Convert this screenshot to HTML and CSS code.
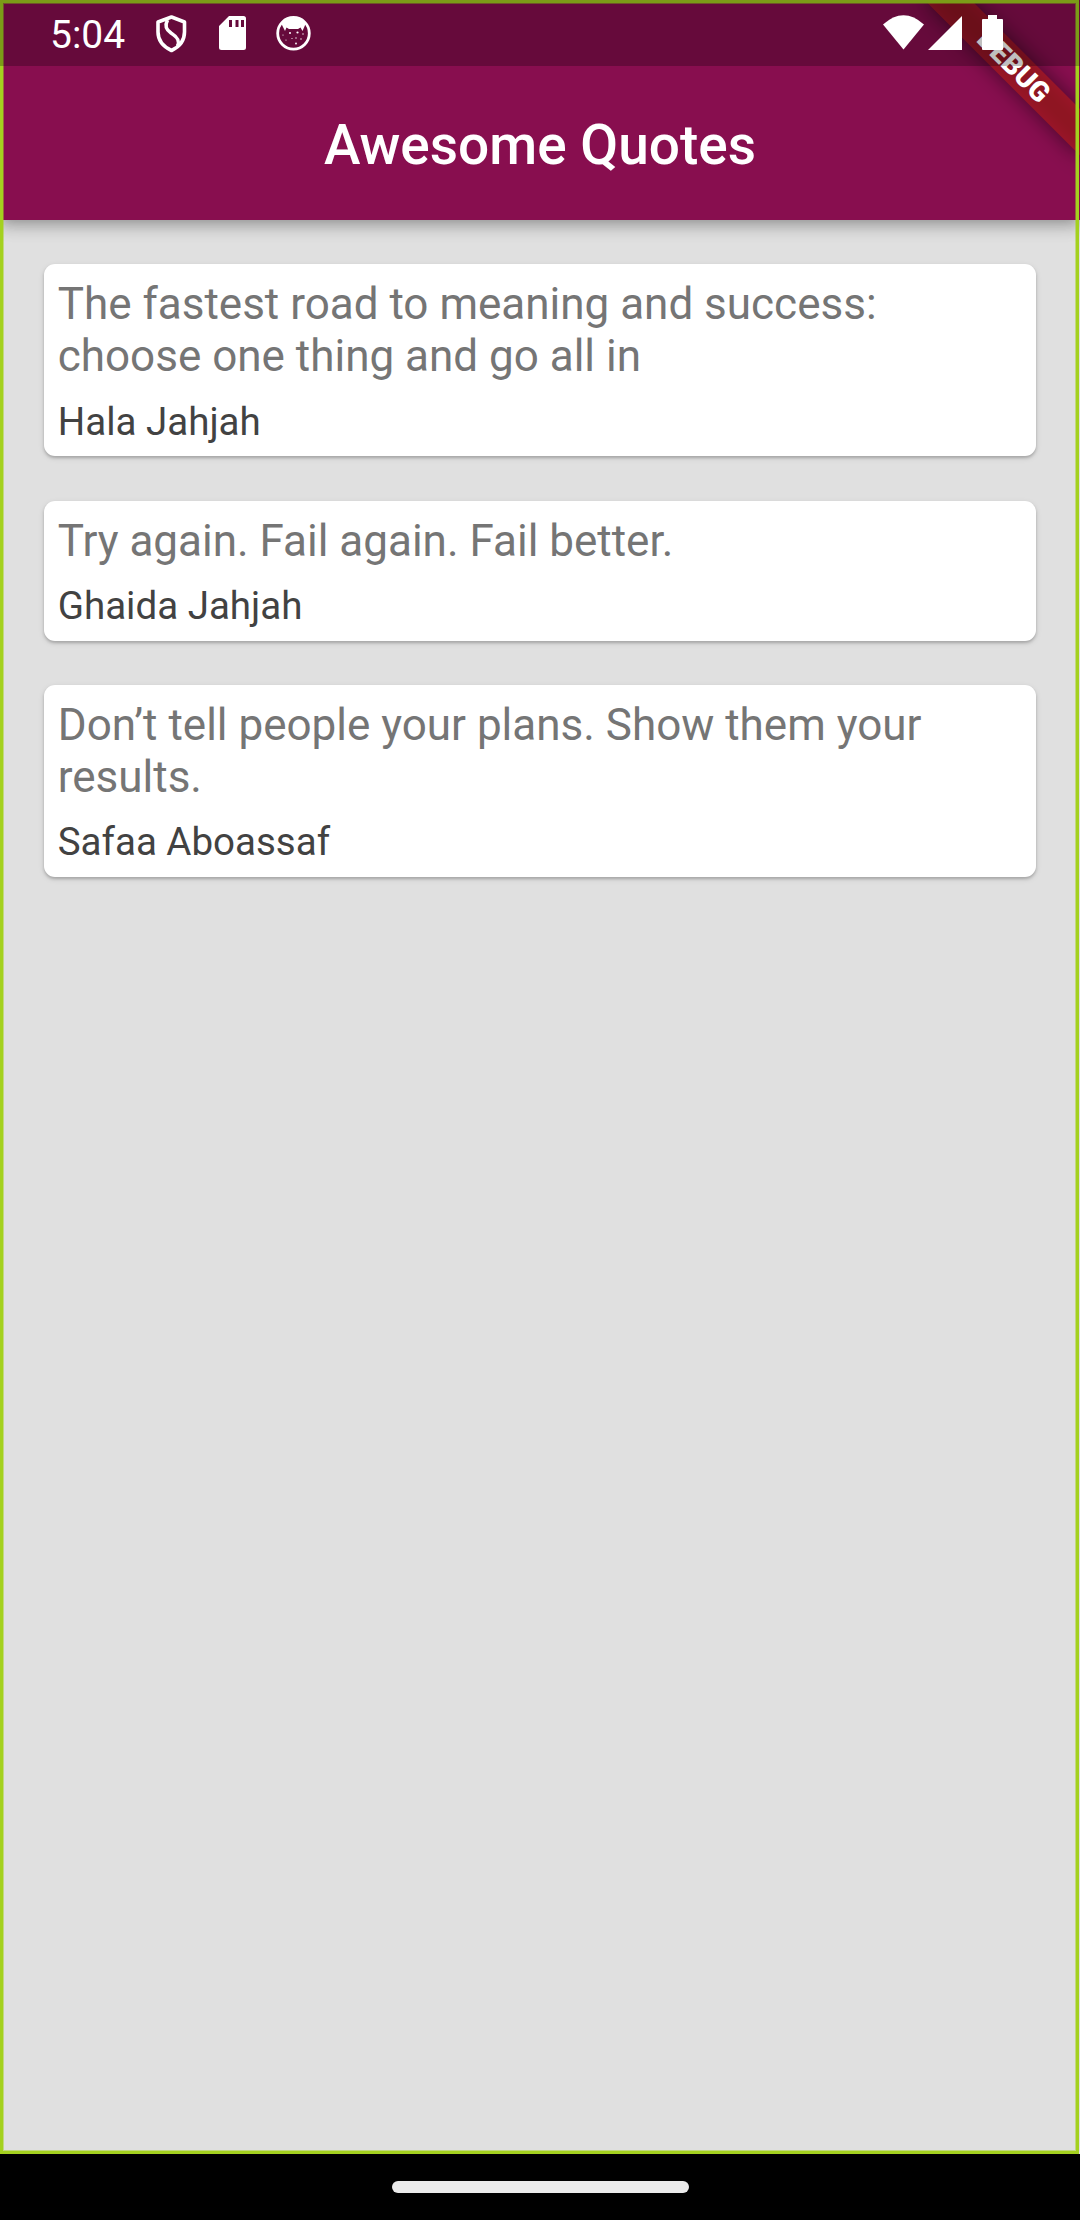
FILE: index.html
```html
<!DOCTYPE html>
<html lang="en">
<head>
<meta charset="utf-8">
<title>Awesome Quotes</title>
<link rel="stylesheet" href="styles.css">
</head>
<body>
<div class="app">
  <header class="app-bar"><h1 class="title">Awesome Quotes</h1></header>
  <main class="quotes">
    <article class="card">
      <p class="quote">The fastest road to meaning and success: choose one thing and go all in</p>
      <p class="author">Hala Jahjah</p>
    </article>
    <article class="card">
      <p class="quote">Try again. Fail again. Fail better.</p>
      <p class="author">Ghaida Jahjah</p>
    </article>
    <article class="card">
      <p class="quote">Don’t tell people your plans. Show them your results.</p>
      <p class="author">Safaa Aboassaf</p>
    </article>
  </main>
  <div class="ribbon"><span class="ribbon-text">DEBUG</span></div>
  <div class="frame"></div>
</div>
<div class="status-bar">
  <span class="clock">5:04</span>
  <svg class="icon-shield" width="34" height="40" viewBox="0 0 34 40" fill="none" stroke="#fff" stroke-width="3.600" stroke-linejoin="round">
    <path d="M16.500 2 L29.500 7 V17 C29.500 26 25 31.500 16.500 35.500 C8 31.500 3 26 3 17 V7 Z"/>
    <path d="M12.500 5 C9.500 11 11 14.500 16 18 C23 22.500 25 26 22.500 31"/>
  </svg>
  <svg class="icon-sd" width="28" height="36" viewBox="0 0 28 36">
    <path fill="#fff" fill-rule="evenodd" d="M10 1 H24.500 Q27 1 27 3.500 V32.500 Q27 35 24.500 35 H2.500 Q0 35 0 32.500 V11 Z M10 5 V12 H13 V5 Z M16.500 5 V12 H19.500 V5 Z M22 5 V12 H25 V5 Z"/>
  </svg>
  <svg class="icon-cat" width="36" height="36" viewBox="0 0 36 36">
    <circle cx="17.500" cy="18.300" r="15.800" fill="none" stroke="#fff" stroke-width="2.800"/>
    <path fill="#fff" d="M5 8 Q17.500 -3 30 8 L26.500 16 L24.500 12.500 L22 14 H13 L10.500 12.500 L9 16 Z"/>
    <g fill="#fff"><circle cx="14" cy="18" r="1"/><circle cx="21.500" cy="17.500" r="1.100"/><circle cx="7" cy="20" r=".6"/><circle cx="27" cy="19" r=".7"/><circle cx="10" cy="25" r=".6"/><circle cx="20" cy="28.500" r=".9"/><circle cx="25" cy="24" r=".7"/><circle cx="16" cy="23.500" r=".6"/><circle cx="20" cy="23" r=".7"/></g>
  </svg>
  <svg class="icon-wifi" width="42" height="36" viewBox="0 0 42 36"><path fill="#fff" d="M0 9.500 Q20.500 -9 41 9.500 L20.500 34.500 Z"/></svg>
  <svg class="icon-cell" width="35" height="36" viewBox="0 0 35 36"><path fill="#fff" d="M0 35 L34 1 V35 Z"/></svg>
  <svg class="icon-battery" width="22" height="36" viewBox="0 0 22 36"><path fill="#fff" d="M6 0 H15 V4 H20 Q21 4 21 5 V34 Q21 35 20 35 H1 Q0 35 0 34 V5 Q0 4 1 4 H6 Z"/></svg>
</div>
<nav class="nav-bar"><div class="handle"></div></nav>
</body>
</html>
```

FILE: styles.css
```css
* { box-sizing: border-box; }
body {
  margin: 0;
  width: 1080px;
  height: 2220px;
  position: relative;
  display: flex;
  flex-direction: column;
  overflow: hidden;
  background: #000;
  font-family: Roboto, "Liberation Sans", sans-serif;
}
.app {
  position: relative;
  height: 2154px;
  display: flex;
  flex-direction: column;
  overflow: hidden;
  background: #e0e0e0;
}
.app-bar {
  height: 220px;
  padding-top: 70px;
  display: flex;
  align-items: center;
  justify-content: center;
  flex: none;
  background: #880e4f;
  box-shadow: 0 5px 11px -3px rgba(0,0,0,.16), 0 8px 14px rgba(0,0,0,.14), 0 3px 22px rgba(0,0,0,.1);
}
.title {
  margin: 0;
  color: #fff;
  font-size: 55px;
  font-weight: 500;
}
.quotes {
  padding: 44px;
  display: flex;
  flex-direction: column;
  gap: 44.35px;
}
.card {
  padding: 14px 13.75px 12.7px;
  border-radius: 11px;
  background: #fff;
  box-shadow: 0 2px 3px rgba(0,0,0,.2), 0 2px 6px rgba(0,0,0,.1);
}
.quote, .author { margin: 0; }
.quote {
  color: #757575;
  font-size: 44px;
  line-height: 52.25px;
}
.author {
  margin-top: 17.05px;
  color: #424242;
  font-size: 38.5px;
  line-height: 44px;
}
.ribbon {
  position: absolute;
  left: 970px;
  top: 77px;
  width: 220px;
  height: 33px;
  transform: rotate(45deg);
  transform-origin: 110px -77px;
  display: flex;
  align-items: center;
  justify-content: center;
}
.ribbon::before, .ribbon::after {
  content: "";
  position: absolute;
  inset: 0;
}
.ribbon::before { background: rgba(0,0,0,.5); filter: blur(10.9px); }
.ribbon::after { background: rgba(183,28,28,.627); }
.ribbon-text {
  position: relative;
  z-index: 1;
  color: #fff;
  font-size: 28.05px;
  font-weight: 900;
  line-height: 33px;
}
.frame {
  position: absolute;
  inset: 0 1px 0 0;
  border: 3px solid #a4d11f;
  box-shadow: inset 0 0 0 1px rgba(164,209,31,.5);
}
.status-bar {
  position: absolute;
  inset: 0 0 auto 0;
  height: 66px;
  padding: 15px 76px 0 50px;
  display: flex;
  align-items: flex-start;
  background: rgba(0,0,0,.25);
}
.clock {
  width: 105px;
  color: #fff;
  font-size: 39px;
  line-height: 41px;
}
.icon-sd { margin-left: 30px; }
.icon-cat { margin-left: 29px; }
.icon-wifi { margin-left: auto; }
.icon-cell { margin-left: 3px; }
.icon-battery { margin-left: 19px; }
.nav-bar {
  height: 66px;
  display: flex;
  align-items: center;
  justify-content: center;
}
.handle {
  width: 297px;
  height: 12px;
  border-radius: 6px;
  background: #ebebeb;
}
```
